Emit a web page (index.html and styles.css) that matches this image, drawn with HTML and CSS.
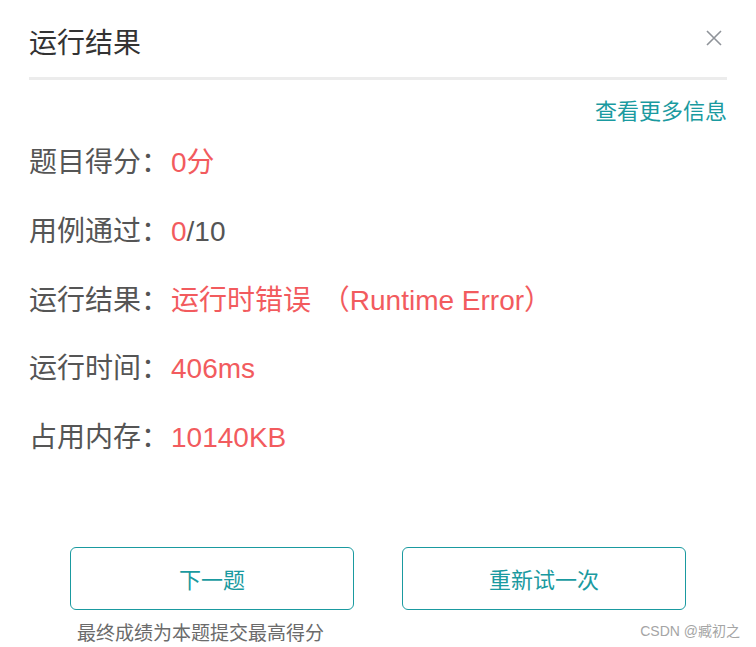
FILE: index.html
```html
<!DOCTYPE html>
<html lang="zh-CN">
<head>
<meta charset="utf-8">
<title>运行结果</title>
<link rel="stylesheet" href="styles.css">
</head>
<body>
<div class="dialog">
  <div class="header">
    <div class="title">运行结果</div>
    <svg class="close" width="16" height="16" viewBox="0 0 16 16"><path d="M1 1 L15 15 M15 1 L1 15" stroke="#8f9399" stroke-width="1.6" fill="none"/></svg>
  </div>
  <div class="more"><a class="more-link">查看更多信息</a></div>
  <div class="rows">
    <div class="row"><span class="label">题目得分：</span><span class="val">0分</span></div>
    <div class="row"><span class="label">用例通过：</span><span class="val">0</span><span class="plain">/10</span></div>
    <div class="row"><span class="label">运行结果：</span><span class="val">运行时错误 <span class="en">（Runtime Error）</span></span></div>
    <div class="row"><span class="label">运行时间：</span><span class="val">406ms</span></div>
    <div class="row"><span class="label">占用内存：</span><span class="val">10140KB</span></div>
  </div>
  <div class="actions">
    <div class="col">
      <button class="btn">下一题</button>
      <div class="note">最终成绩为本题提交最高得分</div>
    </div>
    <div class="col">
      <button class="btn">重新试一次</button>
    </div>
  </div>
</div>
<div class="watermark">CSDN @臧初之</div>
</body>
</html>
```
FILE: styles.css
```css
html, body {
  margin: 0;
  padding: 0;
  background: #fff;
}
body {
  font-family: "Liberation Sans", "Noto Sans CJK SC", sans-serif;
  width: 756px;
  height: 647px;
  position: relative;
  overflow: hidden;
}
.dialog {
  padding: 0 29px;
}
.header {
  display: flex;
  justify-content: space-between;
  align-items: flex-start;
  padding-top: 24px;
  padding-bottom: 13px;
  border-bottom: 3px solid #ececec;
}
.title {
  font-size: 28px;
  line-height: 40px;
  color: #333;
}
.close {
  margin-top: 6px;
  margin-right: 5px;
}
.more {
  display: flex;
  justify-content: flex-end;
  margin-top: 16px;
}
.more-link {
  font-size: 22px;
  line-height: 32px;
  color: #1a9aa0;
}
.rows {
  display: flex;
  flex-direction: column;
  margin-top: 1px;
}
.row {
  font-size: 28px;
  line-height: 68.75px;
  height: 68.75px;
  color: #555;
  white-space: nowrap;
}
.label {
  color: #555;
  margin-right: 2px;
}
.val {
  color: #f25b5e;
}
.en {
  margin-left: 3px;
}
.plain {
  color: #555;
}
.actions {
  display: flex;
  justify-content: center;
  gap: 48px;
  margin-top: 74px;
}
.col {
  display: flex;
  flex-direction: column;
}
.btn {
  width: 284px;
  height: 63px;
  border: 1px solid #1a9aa0;
  border-radius: 6px;
  background: #fff;
  color: #1a9aa0;
  font-family: "Liberation Sans", "Noto Sans CJK SC", sans-serif;
  font-size: 22px;
  padding: 0;
}
.note {
  margin-top: 10px;
  padding-left: 7px;
  font-size: 19px;
  line-height: 28px;
  color: #6b6b6b;
}
.watermark {
  position: absolute;
  right: 16px;
  top: 621px;
  font-size: 14px;
  line-height: 20px;
  color: #a5a5a5;
}
```
